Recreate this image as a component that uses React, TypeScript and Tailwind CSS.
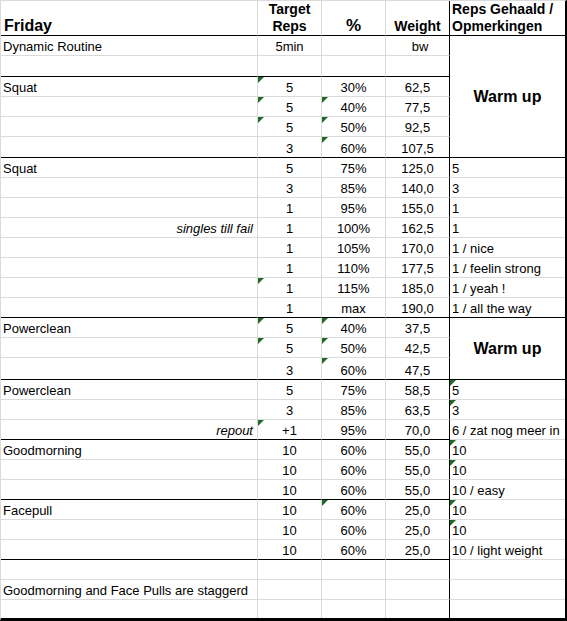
import clsx from "clsx";

type Row = {
  a?: string;
  note?: boolean;
  b?: string;
  c?: string;
  d?: string;
  e?: string;
  tb?: boolean;
  tc?: boolean;
  te?: boolean;
  h?: 18 | 20 | 21 | 22;
  end?: boolean; // black line under A-D
  eEnd?: boolean; // black line under E too
  warm?: 3 | 6; // merged "Warm up" cell starts here
  merged?: boolean; // E covered by a merge
  last?: boolean;
  small?: boolean;
};

const rows: Row[] = [
  { a: "Dynamic Routine", b: "5min", d: "bw", warm: 6, small: true },
  { merged: true, end: true, h: 21 },
  { a: "Squat", b: "5", c: "30%", d: "62,5", tb: true, merged: true },
  { b: "5", c: "40%", d: "77,5", tb: true, tc: true, merged: true },
  { b: "5", c: "50%", d: "92,5", tb: true, tc: true, merged: true },
  { b: "3", c: "60%", d: "107,5", tc: true, merged: true, end: true, h: 21 },
  { a: "Squat", b: "5", c: "75%", d: "125,0", e: "5" },
  { b: "3", c: "85%", d: "140,0", e: "3" },
  { b: "1", c: "95%", d: "155,0", e: "1" },
  { a: "singles till fail", note: true, b: "1", c: "100%", d: "162,5", e: "1" },
  { b: "1", c: "105%", d: "170,0", e: "1 / nice" },
  { b: "1", c: "110%", d: "177,5", e: "1 / feelin strong" },
  { b: "1", c: "115%", d: "185,0", e: "1 / yeah !", tb: true },
  { b: "1", c: "max", d: "190,0", e: "1 / all the way", end: true, eEnd: true },
  { a: "Powerclean", b: "5", c: "40%", d: "37,5", tb: true, tc: true, warm: 3 },
  { b: "5", c: "50%", d: "42,5", tb: true, tc: true, merged: true },
  { b: "3", c: "60%", d: "47,5", tc: true, merged: true, end: true, h: 22 },
  { a: "Powerclean", b: "5", c: "75%", d: "58,5", e: "5", te: true },
  { b: "3", c: "85%", d: "63,5", e: "3", te: true },
  { a: "repout", note: true, b: "+1", c: "95%", d: "70,0", e: "6 / zat nog meer in", tb: true, end: true },
  { a: "Goodmorning", b: "10", c: "60%", d: "55,0", e: "10", te: true },
  { b: "10", c: "60%", d: "55,0", e: "10", te: true },
  { b: "10", c: "60%", d: "55,0", e: "10 / easy", end: true },
  { a: "Facepull", b: "10", c: "60%", d: "25,0", e: "10", tc: true, te: true },
  { b: "10", c: "60%", d: "25,0", e: "10", te: true },
  { b: "10", c: "60%", d: "25,0", e: "10 / light weight", end: true },
  {},
  { a: "Goodmorning and Face Pulls are staggerd" },
  { h: 18, last: true },
];

function Tri() {
  return (
    <svg className="absolute left-0 top-0" width="6" height="6" viewBox="0 0 6 6">
      <path d="M0 0H6L0 6Z" fill="#1f6b2a" />
    </svg>
  );
}

function rowH(h?: number) {
  if (h === 18) return "h-[18px]";
  if (h === 21) return "h-[21px]";
  if (h === 22) return "h-[22px]";
  return "h-[20px]";
}

function bottom(r: Row, black?: boolean) {
  if (r.last) return "border-b-0";
  return black ? "border-b border-b-black" : "border-b border-b-[#dadada]";
}

function BodyRow({ r }: { r: Row }) {
  const base = "relative flex items-end pb-px leading-[15px] text-[13px]";
  return (
    <>
      <div
        className={clsx(
          base,
          rowH(r.h),
          bottom(r, r.end),
          "border-r border-r-[#dadada]",
          r.note ? "justify-end pr-[4px] text-[11px] italic" : "pl-[2px]"
        )}
      >
        {r.a}
      </div>
      <div
        className={clsx(
          base,
          rowH(r.h),
          bottom(r, r.end),
          "border-r border-r-[#dadada] justify-center",
          r.small && "text-[11px]"
        )}
      >
        {r.tb && <Tri />}
        {r.b}
      </div>
      <div
        className={clsx(
          base,
          rowH(r.h),
          bottom(r, r.end),
          "border-r border-r-[#dadada] justify-center",
          r.c === "max" && "text-[12px]"
        )}
      >
        {r.tc && <Tri />}
        {r.c}
      </div>
      <div
        className={clsx(
          base,
          rowH(r.h),
          bottom(r, r.end),
          "border-r border-r-black justify-center",
          r.small && "text-[11px] pl-[5px]"
        )}
      >
        {r.d}
      </div>
      {r.warm === 6 && (
        <div className="row-span-6 flex items-center justify-center border-b border-b-black text-[16px] font-bold">
          Warm up
        </div>
      )}
      {r.warm === 3 && (
        <div className="row-span-3 flex items-center justify-center border-b border-b-black text-[16px] font-bold">
          Warm up
        </div>
      )}
      {!r.warm && !r.merged && (
        <div className={clsx(base, rowH(r.h), bottom(r, r.eEnd), "pl-[2px]")}>
          {r.te && <Tri />}
          {r.e}
        </div>
      )}
    </>
  );
}

export default function App() {
  return (
    <div className="w-[567px] h-[621px] bg-white text-black font-['Liberation_Sans',Arial,sans-serif] overflow-hidden">
      <div className="grid grid-cols-[257px_64px_64px_64px_115px] border-l border-l-[#dadada] border-t border-t-[#dadada] border-r-2 border-r-black border-b-[3px] border-b-black">
        {/* header */}
        <div className="h-[35px] flex items-end pl-[3px] text-[16px] font-bold leading-[18px] border-r border-r-[#dadada] border-b border-b-black">
          Friday
        </div>
        <div className="h-[35px] flex items-end justify-center text-center text-[14px] font-bold leading-[17px] border-r border-r-[#dadada] border-b border-b-black">
          Target
          <br />
          Reps
        </div>
        <div className="h-[35px] flex items-end justify-center text-[17px] font-bold leading-[18px] border-r border-r-[#dadada] border-b border-b-black">
          %
        </div>
        <div className="h-[35px] flex items-end justify-center text-[14px] font-bold leading-[17px] border-r border-r-black border-b border-b-black">
          Weight
        </div>
        <div className="h-[35px] flex items-end pl-[2px] text-[14px] font-bold leading-[17px] border-b border-b-black">
          Reps Gehaald /
          <br />
          Opmerkingen
        </div>

        {rows.map((r, i) => (
          <BodyRow key={i} r={r} />
        ))}
      </div>
    </div>
  );
}
